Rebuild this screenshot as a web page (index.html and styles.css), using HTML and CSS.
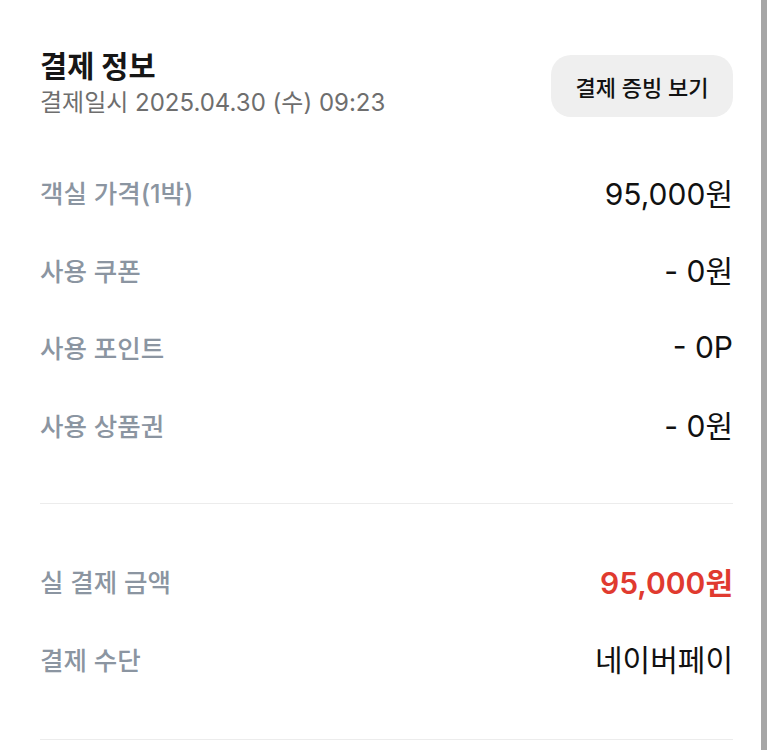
FILE: index.html
```html
<!DOCTYPE html>
<html lang="ko">
<head>
<meta charset="utf-8">
<link rel="stylesheet" href="styles.css">
</head>
<body>
<div class="page">
  <main class="content">
    <header class="head">
      <div class="head-text">
        <h1 class="title">결제 정보</h1>
        <p class="date">결제일시 2025.04.30 (수) 09:23</p>
      </div>
      <button class="receipt">결제 증빙 보기</button>
    </header>
    <section class="rows">
      <div class="row"><span class="label">객실 가격(1박)</span><span class="value">95,000원</span></div>
      <div class="row"><span class="label">사용 쿠폰</span><span class="value">- 0원</span></div>
      <div class="row"><span class="label">사용 포인트</span><span class="value">- 0P</span></div>
      <div class="row"><span class="label">사용 상품권</span><span class="value">- 0원</span></div>
    </section>
    <hr class="divider">
    <section class="rows rows-total">
      <div class="row"><span class="label">실 결제 금액</span><span class="value total">95,000원</span></div>
      <div class="row"><span class="label">결제 수단</span><span class="value">네이버페이</span></div>
    </section>
    <hr class="divider divider-end">
  </main>
  <div class="scrollbar"></div>
</div>
</body>
</html>
```
FILE: styles.css
```css
* { box-sizing: border-box; }
html, body {
  margin: 0;
  padding: 0;
  background: #ffffff;
}
body {
  font-family: "Inter", "Noto Sans CJK KR", "Noto Sans", sans-serif;
  color: #111111;
}
.page {
  display: flex;
  width: 773px;
  height: 750px;
  overflow: hidden;
}
.content {
  flex: 1;
  padding: 46px 28px 0 40px;
}
.head {
  display: flex;
  justify-content: space-between;
  align-items: flex-start;
}
.title {
  margin: 0;
  font-size: 29.5px;
  font-weight: 700;
  line-height: 40px;
  color: #161616;
}
.date {
  margin: 0;
  font-size: 24px;
  line-height: 34px;
  color: #6e6e6e;
  font-weight: 400;
}
.receipt {
  margin-top: 9px;
  width: 182px;
  height: 62px;
  padding: 0;
  border: none;
  border-radius: 20px;
  background: #efefef;
  font-family: inherit;
  font-size: 22px;
  font-weight: 500;
  color: #111111;
}
.rows {
  display: flex;
  flex-direction: column;
  margin-top: 33px;
}
.row {
  display: flex;
  justify-content: space-between;
  align-items: center;
  height: 77.5px;
}
.label {
  font-size: 25.5px;
  color: #8b95a1;
  font-weight: 500;
}
.value {
  font-size: 30px;
  color: #111111;
  font-weight: 400;
}
.total {
  color: #e03a2f;
  font-weight: 600;
}
.divider {
  border: none;
  border-top: 1px solid #ececec;
  margin: 40px 0 0;
}
.divider-end { margin-top: 42px; }
.rows-total { margin-top: 38px; }
.scrollbar {
  width: 6px;
  margin-right: 6px;
  background: #a6a6a6;
}
```
